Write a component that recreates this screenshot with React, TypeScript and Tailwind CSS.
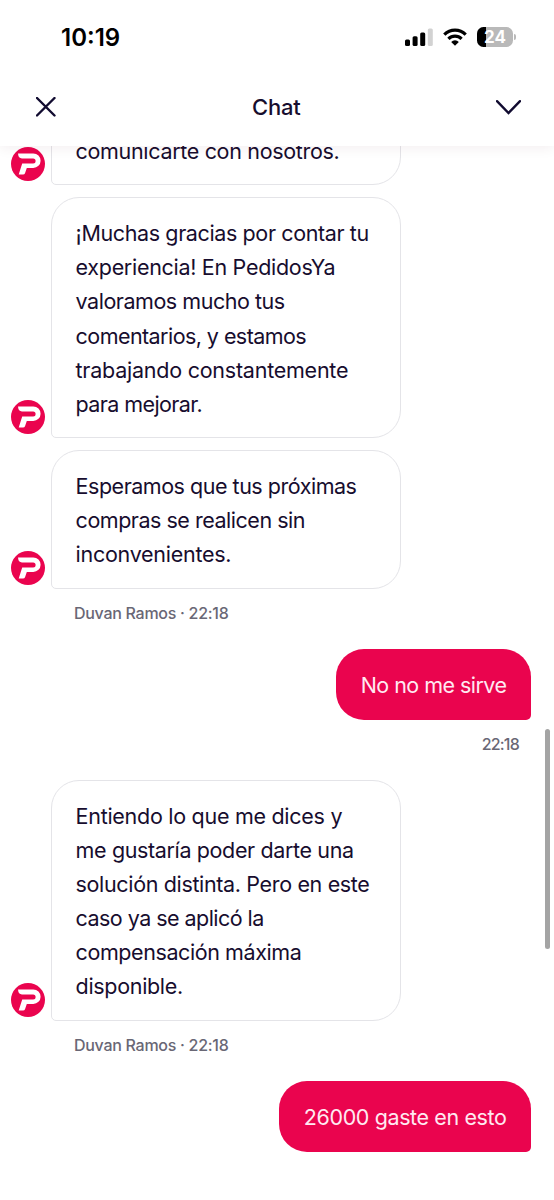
import { clsx } from "clsx"

type Line = { text: string; tracking?: string }

const survey: Line[] = [{ text: "comunicarte con nosotros.", tracking: "tracking-[-0.33px]" }]

const thanks: Line[] = [
  { text: "¡Muchas gracias por contar tu", tracking: "tracking-[-0.38px]" },
  { text: "experiencia! En PedidosYa", tracking: "tracking-[-0.3px]" },
  { text: "valoramos mucho tus", tracking: "tracking-[-0.47px]" },
  { text: "comentarios, y estamos", tracking: "tracking-[-0.56px]" },
  { text: "trabajando constantemente", tracking: "tracking-[-0.24px]" },
  { text: "para mejorar.", tracking: "tracking-[-0.6px]" },
]

const closing: Line[] = [
  { text: "Esperamos que tus próximas", tracking: "tracking-[-0.48px]" },
  { text: "compras se realicen sin", tracking: "tracking-[-0.48px]" },
  { text: "inconvenientes.", tracking: "tracking-[-0.27px]" },
]

const answer: Line[] = [
  { text: "Entiendo lo que me dices y", tracking: "tracking-[-0.28px]" },
  { text: "me gustaría poder darte una", tracking: "tracking-[-0.37px]" },
  { text: "solución distinta. Pero en este", tracking: "tracking-[-0.35px]" },
  { text: "caso ya se aplicó la", tracking: "tracking-[-0.54px]" },
  { text: "compensación máxima", tracking: "tracking-[-0.42px]" },
  { text: "disponible.", tracking: "tracking-[-0.32px]" },
]

function Avatar() {
  return (
    <svg className="mb-[4px] size-[34px] shrink-0" viewBox="0 0 34 34">
      <circle cx="17" cy="17" r="17" fill="#ea044e" />
      <path
        d="M7 6.4H22.3A7.3 7.3 0 0 1 22.3 21H15.8L14 26.2Q13.5 27.6 12 27.6H7.7L11.2 16.4H22.1A2.5 2.5 0 0 0 22.1 11.4H11Q7.3 11.2 7 6.4Z"
        fill="white"
      />
    </svg>
  )
}

function AgentMessage({ lines, className }: { lines: Line[]; className?: string }) {
  return (
    <div className={clsx("flex items-end gap-[6px] pl-[11.4px]", className)}>
      <Avatar />
      <div className="w-[350px] rounded-[28px] rounded-bl-[5px] border-[1.3px] border-[#e4e4e8] bg-white pt-[18px] pb-[16px] pl-[23.2px] text-[21.5px] leading-[34.15px]">
        {lines.map((line) => (
          <p key={line.text} className={clsx("whitespace-nowrap", line.tracking)}>
            {line.text}
          </p>
        ))}
      </div>
    </div>
  )
}

function UserMessage({ children, className, tracking }: { children: string; className?: string; tracking: string }) {
  return (
    <div className={clsx("flex justify-end pr-[23px]", className)}>
      <div
        className={clsx(
          "flex h-[71px] items-center whitespace-nowrap rounded-[28px] rounded-br-[5px] bg-[#ea044e] px-[24.5px] pt-[3px] text-[21.5px] text-[#ffe9f1]",
          tracking,
        )}
      >
        {children}
      </div>
    </div>
  )
}

function AgentCaption({ className }: { className?: string }) {
  return (
    <p className={clsx("pl-[74px] text-[16px] font-medium leading-5 tracking-[-0.28px] text-[#696775]", className)}>
      Duvan Ramos · 22:18
    </p>
  )
}

function StatusBar() {
  return (
    <div className="flex h-[74px] items-center justify-between pl-[61px] pr-[37px] text-black">
      <span className="pt-[2px] text-[24px] font-semibold leading-none">10:19</span>
      <div className="flex items-center">
        <svg className="h-[18px] w-[28px]" viewBox="0 0 28 18">
          <rect x="0" y="11.5" width="5" height="6.5" rx="1.5" />
          <rect x="7.6" y="8.2" width="5" height="9.8" rx="1.5" />
          <rect x="15.2" y="4.4" width="5" height="13.6" rx="1.5" />
          <rect x="22.8" y="0.4" width="5" height="17.6" rx="1.5" fill="#d2d2d2" />
        </svg>
        <svg className="ml-[10px] h-[18px] w-[24px]" viewBox="0 0 24 18" fill="none" stroke="black" strokeWidth="3.2">
          <path d="M1.3 6.6A15.2 15.2 0 0 1 22.7 6.6" />
          <path d="M5.4 10.9A9.4 9.4 0 0 1 18.6 10.9" />
          <path d="M8.2 13.9A5.3 5.3 0 0 1 15.8 13.9L12 17.7Z" fill="black" stroke="none" />
        </svg>
        <div className="relative ml-[10px] flex h-[20px] w-[36px] items-center justify-center overflow-hidden rounded-[6.5px] bg-[#b9b9b9]">
          <div className="absolute inset-y-0 left-0 w-[9px] bg-black" />
          <span className="relative text-[17px] font-bold leading-none text-white">24</span>
        </div>
        <div className="ml-[1px] mr-px h-[6px] w-[2px] rounded-r-full bg-[#b9b9b9]" />
      </div>
    </div>
  )
}

export default function App() {
  return (
    <div className="relative flex h-[1200px] w-[554px] flex-col overflow-hidden bg-white font-['Inter',sans-serif] text-[#170d2e]">
      <header className="relative z-10 h-[146px] shrink-0 bg-white shadow-[0_2px_12px_rgba(80,20,40,0.07)]">
        <StatusBar />
        <div className="flex h-[66px] items-center justify-between pl-[35.5px] pr-[33px]">
          <svg className="h-5 w-5" viewBox="0 0 20 20" fill="none" stroke="#110b30" strokeWidth="2.4" strokeLinecap="round">
            <path d="M1 1L18.5 18.5M18.5 1L1 18.5" />
          </svg>
          <h1 className="pl-px text-[22px] font-medium leading-none tracking-[-0.2px]">Chat</h1>
          <svg className="h-[15px] w-[25px]" viewBox="0 0 25 15" fill="none" stroke="#110b30" strokeWidth="2.4" strokeLinecap="round">
            <path d="M1 1.2L12.5 13L24 1.2" />
          </svg>
        </div>
      </header>

      <main className="flex min-h-0 flex-1 flex-col">
        <AgentMessage lines={survey} className="-mt-[31px]" />
        <AgentMessage lines={thanks} className="mt-[12px]" />
        <AgentMessage lines={closing} className="mt-[12px]" />
        <AgentCaption className="mt-[14px]" />
        <UserMessage className="mt-[26px]" tracking="tracking-[-0.54px]">
          No no me sirve
        </UserMessage>
        <p className="mt-[14px] pr-[35px] text-right text-[16px] font-medium leading-5 tracking-[-0.8px] text-[#696775]">
          22:18
        </p>
        <AgentMessage lines={answer} className="mt-[26px]" />
        <AgentCaption className="mt-[14px]" />
        <UserMessage className="mt-[26px]" tracking="tracking-[-0.39px]">
          26000 gaste en esto
        </UserMessage>
      </main>

      {/* Scroll indicator */}
      <div className="absolute right-[4px] top-[729px] h-[220px] w-[5px] rounded-full bg-[#a4a4a4]" />
    </div>
  )
}
